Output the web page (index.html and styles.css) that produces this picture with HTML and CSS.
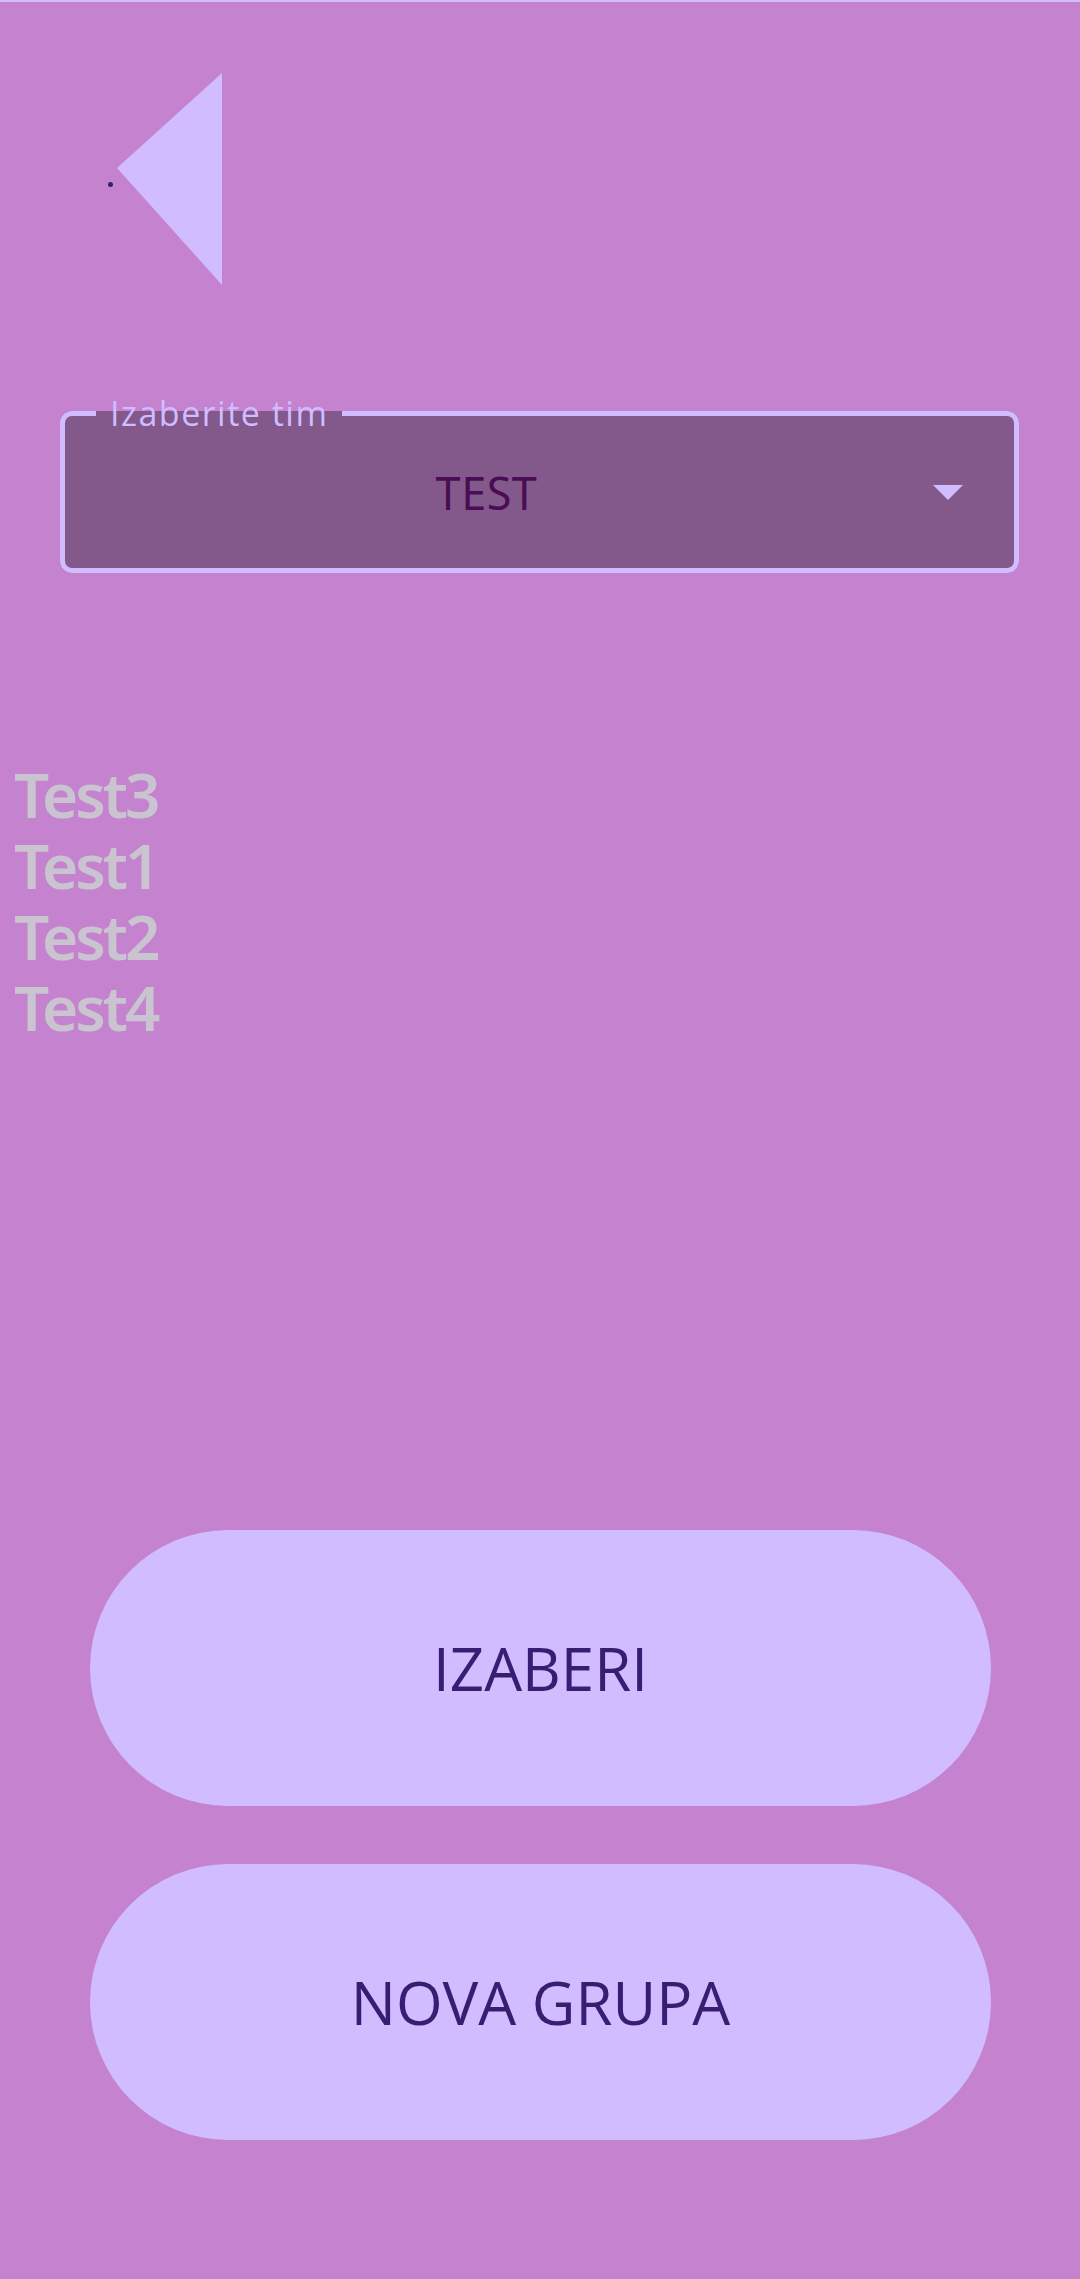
FILE: index.html
```html
<!DOCTYPE html>
<html lang="sr">
<head>
<meta charset="utf-8">
<title>Izaberite tim</title>
<link rel="stylesheet" href="styles.css">
</head>
<body>
<div class="page">
  <header class="header">
    <span class="dot"></span>
    <svg class="back" width="106" height="212" viewBox="0 0 106 212" aria-label="Nazad">
      <polygon points="1,95 106,0 106,212" fill="#d0bcff"/>
    </svg>
  </header>

  <fieldset class="select">
    <legend class="select-label">Izaberite tim</legend>
    <div class="select-row">
      <span class="select-value">TEST</span>
      <svg class="select-arrow" width="30" height="15" viewBox="0 0 30 15">
        <polygon points="0,0 30,0 15,15" fill="#d0bcff"/>
      </svg>
    </div>
  </fieldset>

  <ul class="list">
    <li>Test3</li>
    <li>Test1</li>
    <li>Test2</li>
    <li>Test4</li>
  </ul>

  <div class="actions">
    <button class="pill">IZABERI</button>
    <button class="pill">NOVA GRUPA</button>
  </div>
</div>
</body>
</html>
```

FILE: styles.css
```css
html, body {
  margin: 0;
  padding: 0;
}

body {
  background: #c482cf;
  font-family: "Noto Sans", "Open Sans", sans-serif;
  min-height: 2279px;
}

.page {
  border-top: 2px solid #d0bcff;
  min-height: 2277px;
}

.header {
  display: flex;
  align-items: flex-start;
  padding: 71px 0 0 108px;
}

.dot {
  width: 5px;
  height: 5px;
  border-radius: 50%;
  background: #381e72;
  margin-top: 109px;
}

.back {
  display: block;
  margin-left: 3px;
}

.select {
  margin: 108px 0 0 60px;
  width: 959px;
  box-sizing: border-box;
  padding: 0;
  border: 5px solid #d0bcff;
  border-radius: 12px;
  background: #82598a;
  min-width: 0;
}

.select-label {
  margin-left: 31px;
  padding: 0 14px;
  font-family: "Open Sans", "Noto Sans", sans-serif;
  font-size: 34px;
  line-height: 40px;
  letter-spacing: 1.5px;
  color: #d0bcff;
}

.select-row {
  display: flex;
  align-items: center;
  height: 118px;
  padding-bottom: 17px;
}

.select-value {
  flex: 1;
  text-align: center;
  font-size: 45px;
  color: #4a0d55;
  letter-spacing: 0.5px;
}

.select-arrow {
  display: block;
  margin: 0 51px 0 25px;
}

.list {
  list-style: none;
  margin: 186px 0 0 0;
  padding: 0 0 0 14px;
  font-family: "Noto Sans", sans-serif;
  font-size: 62px;
  line-height: 71px;
  font-weight: 600;
  color: #cac4d0;
  letter-spacing: -3px;
}

.actions {
  display: flex;
  flex-direction: column;
  gap: 58px;
  margin: 487px 0 0 90px;
  width: 901px;
}

.pill {
  height: 276px;
  border: none;
  border-radius: 138px;
  background: #d0bcff;
  color: #381e72;
  font-family: "Open Sans", "Noto Sans", sans-serif;
  font-size: 60px;
  padding: 0;
}
```
